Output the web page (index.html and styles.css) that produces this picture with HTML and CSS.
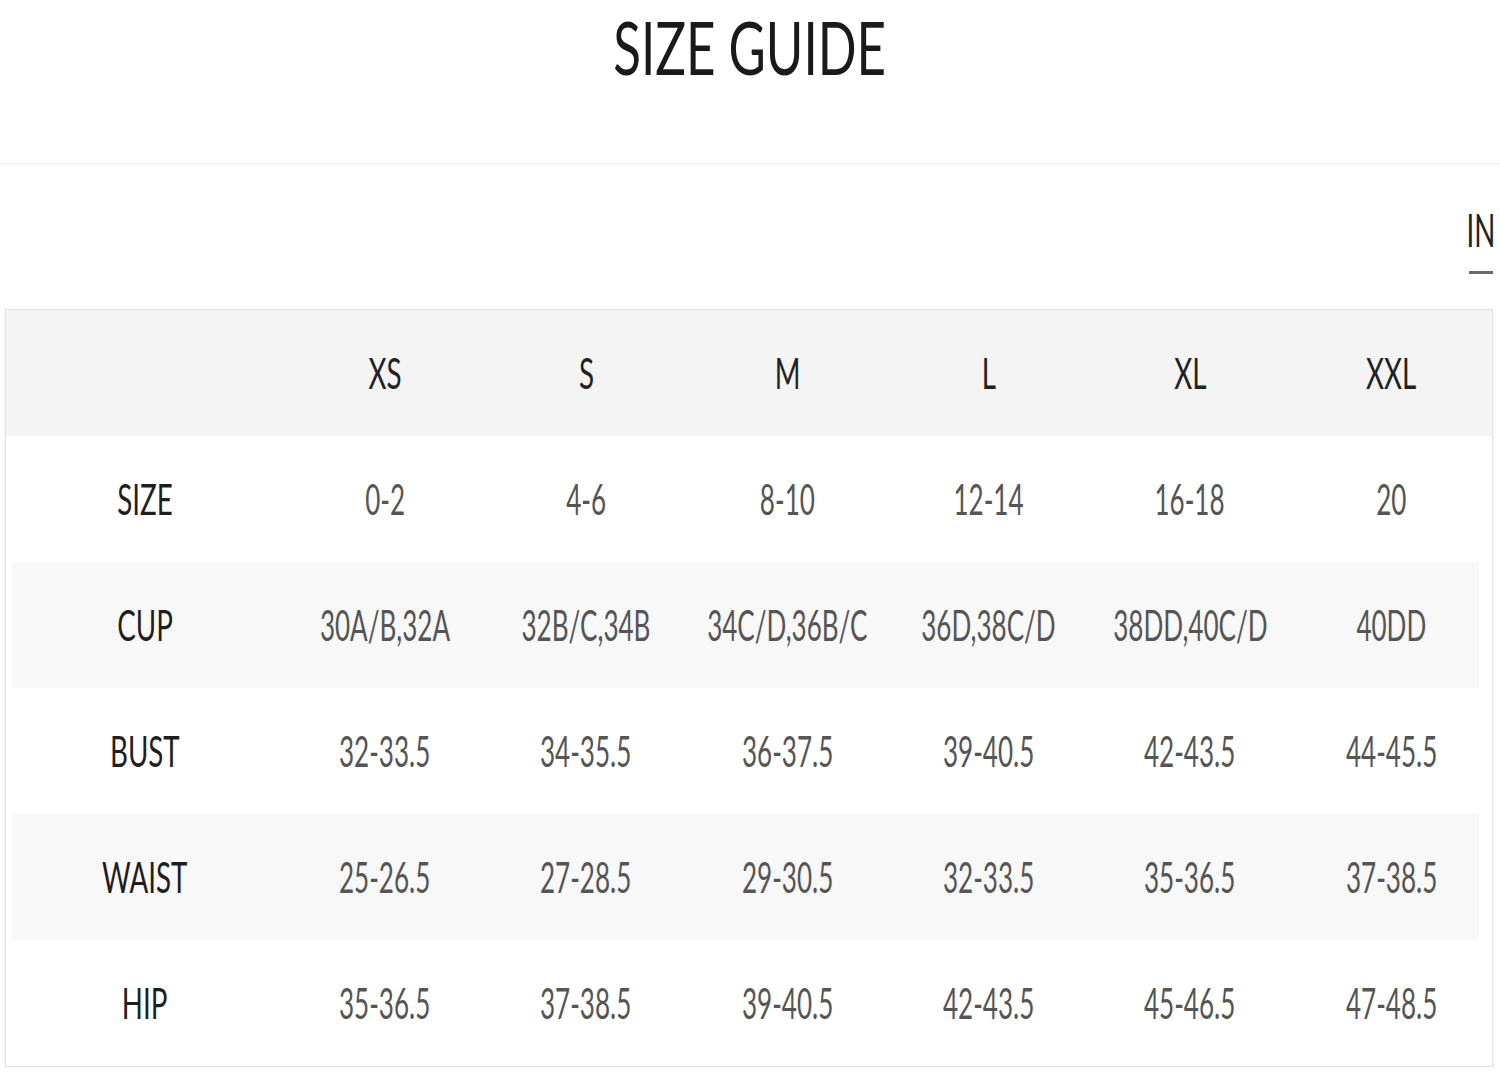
FILE: index.html
```html
<!DOCTYPE html>
<html lang="en">
<head>
<meta charset="utf-8">
<title>Size Guide</title>
<link rel="stylesheet" href="styles.css">
</head>
<body>
<header class="page-head">
  <h1 class="title"><span class="sq">SIZE GUIDE</span></h1>
</header>
<nav class="tabs">
  <div class="tab active"><span class="sq">IN</span></div>
</nav>
<section class="chart">
  <div class="row head">
    <div class="cell"></div>
    <div class="cell"><span class="sq">XS</span></div>
    <div class="cell"><span class="sq">S</span></div>
    <div class="cell"><span class="sq">M</span></div>
    <div class="cell"><span class="sq">L</span></div>
    <div class="cell"><span class="sq">XL</span></div>
    <div class="cell"><span class="sq">XXL</span></div>
  </div>
  <div class="row">
    <div class="cell label"><span class="sq">SIZE</span></div>
    <div class="cell val"><span class="sq">0-2</span></div>
    <div class="cell val"><span class="sq">4-6</span></div>
    <div class="cell val"><span class="sq">8-10</span></div>
    <div class="cell val"><span class="sq">12-14</span></div>
    <div class="cell val"><span class="sq">16-18</span></div>
    <div class="cell val"><span class="sq">20</span></div>
  </div>
  <div class="row stripe">
    <div class="cell label"><span class="sq">CUP</span></div>
    <div class="cell val"><span class="sq">30A/B,32A</span></div>
    <div class="cell val"><span class="sq">32B/C,34B</span></div>
    <div class="cell val"><span class="sq">34C/D,36B/C</span></div>
    <div class="cell val"><span class="sq">36D,38C/D</span></div>
    <div class="cell val"><span class="sq">38DD,40C/D</span></div>
    <div class="cell val"><span class="sq">40DD</span></div>
  </div>
  <div class="row">
    <div class="cell label"><span class="sq">BUST</span></div>
    <div class="cell val"><span class="sq">32-33.5</span></div>
    <div class="cell val"><span class="sq">34-35.5</span></div>
    <div class="cell val"><span class="sq">36-37.5</span></div>
    <div class="cell val"><span class="sq">39-40.5</span></div>
    <div class="cell val"><span class="sq">42-43.5</span></div>
    <div class="cell val"><span class="sq">44-45.5</span></div>
  </div>
  <div class="row stripe">
    <div class="cell label"><span class="sq">WAIST</span></div>
    <div class="cell val"><span class="sq">25-26.5</span></div>
    <div class="cell val"><span class="sq">27-28.5</span></div>
    <div class="cell val"><span class="sq">29-30.5</span></div>
    <div class="cell val"><span class="sq">32-33.5</span></div>
    <div class="cell val"><span class="sq">35-36.5</span></div>
    <div class="cell val"><span class="sq">37-38.5</span></div>
  </div>
  <div class="row">
    <div class="cell label"><span class="sq">HIP</span></div>
    <div class="cell val"><span class="sq">35-36.5</span></div>
    <div class="cell val"><span class="sq">37-38.5</span></div>
    <div class="cell val"><span class="sq">39-40.5</span></div>
    <div class="cell val"><span class="sq">42-43.5</span></div>
    <div class="cell val"><span class="sq">45-46.5</span></div>
    <div class="cell val"><span class="sq">47-48.5</span></div>
  </div>
</section>
</body>
</html>
```

FILE: styles.css
```css
* { box-sizing: border-box; }
html, body { margin: 0; padding: 0; background: #fff; }
body {
  width: 1500px;
  font-family: Lato, "Open Sans", "Liberation Sans", sans-serif;
  color: #222;
}

.sq {
  display: inline-block;
  transform: scaleX(0.66);
  transform-origin: center;
  white-space: nowrap;
}

.page-head {
  height: 164px;
  padding-top: 10px;
  border-bottom: 1px solid #ececec;
  box-shadow: 0 1px 2px rgba(0, 0, 0, 0.04);
  text-align: center;
}
.title {
  margin: 0;
  font-size: 74px;
  line-height: 1;
  font-weight: 400;
  color: #1a1a1a;
}
.title .sq { transform: scaleX(0.69); }

.tabs {
  display: flex;
  justify-content: flex-end;
  padding: 43px 0 0 0;
  margin-bottom: 35px;
}
.tab {
  display: flex;
  flex-direction: column;
  align-items: center;
  margin-right: -5px;
  font-size: 46px;
  line-height: 1;
  color: #222;
}
.tab .sq { transform: scaleX(0.6); }
.tab.active::after {
  content: "";
  display: block;
  width: 24px;
  height: 3px;
  margin-top: 18px;
  background: #6a6a6a;
}

.chart {
  margin: 0 7px 0 5px;
  border: 1px solid #e2e2e2;
  box-shadow: 0 1px 3px rgba(0, 0, 0, 0.08);
}
.row {
  display: grid;
  grid-template-columns: 278px repeat(6, minmax(0, 1fr));
  height: 126px;
  align-items: center;
}
.row.head { background: #f4f4f4; }
.row.stripe {
  background: linear-gradient(#f8f8f8, #f8f8f8) no-repeat;
  background-size: calc(100% - 19px) 100%;
  background-position: 6px 0;
}
.cell {
  display: flex;
  justify-content: center;
  min-width: 0;
  font-size: 42px;
  line-height: 1;
  color: #555;
}
.cell .sq { flex: none; }
.cell.val .sq { transform: scaleX(0.62); }
.row.head .cell { color: #222; }
.cell.label { color: #1e1e1e; }
```
